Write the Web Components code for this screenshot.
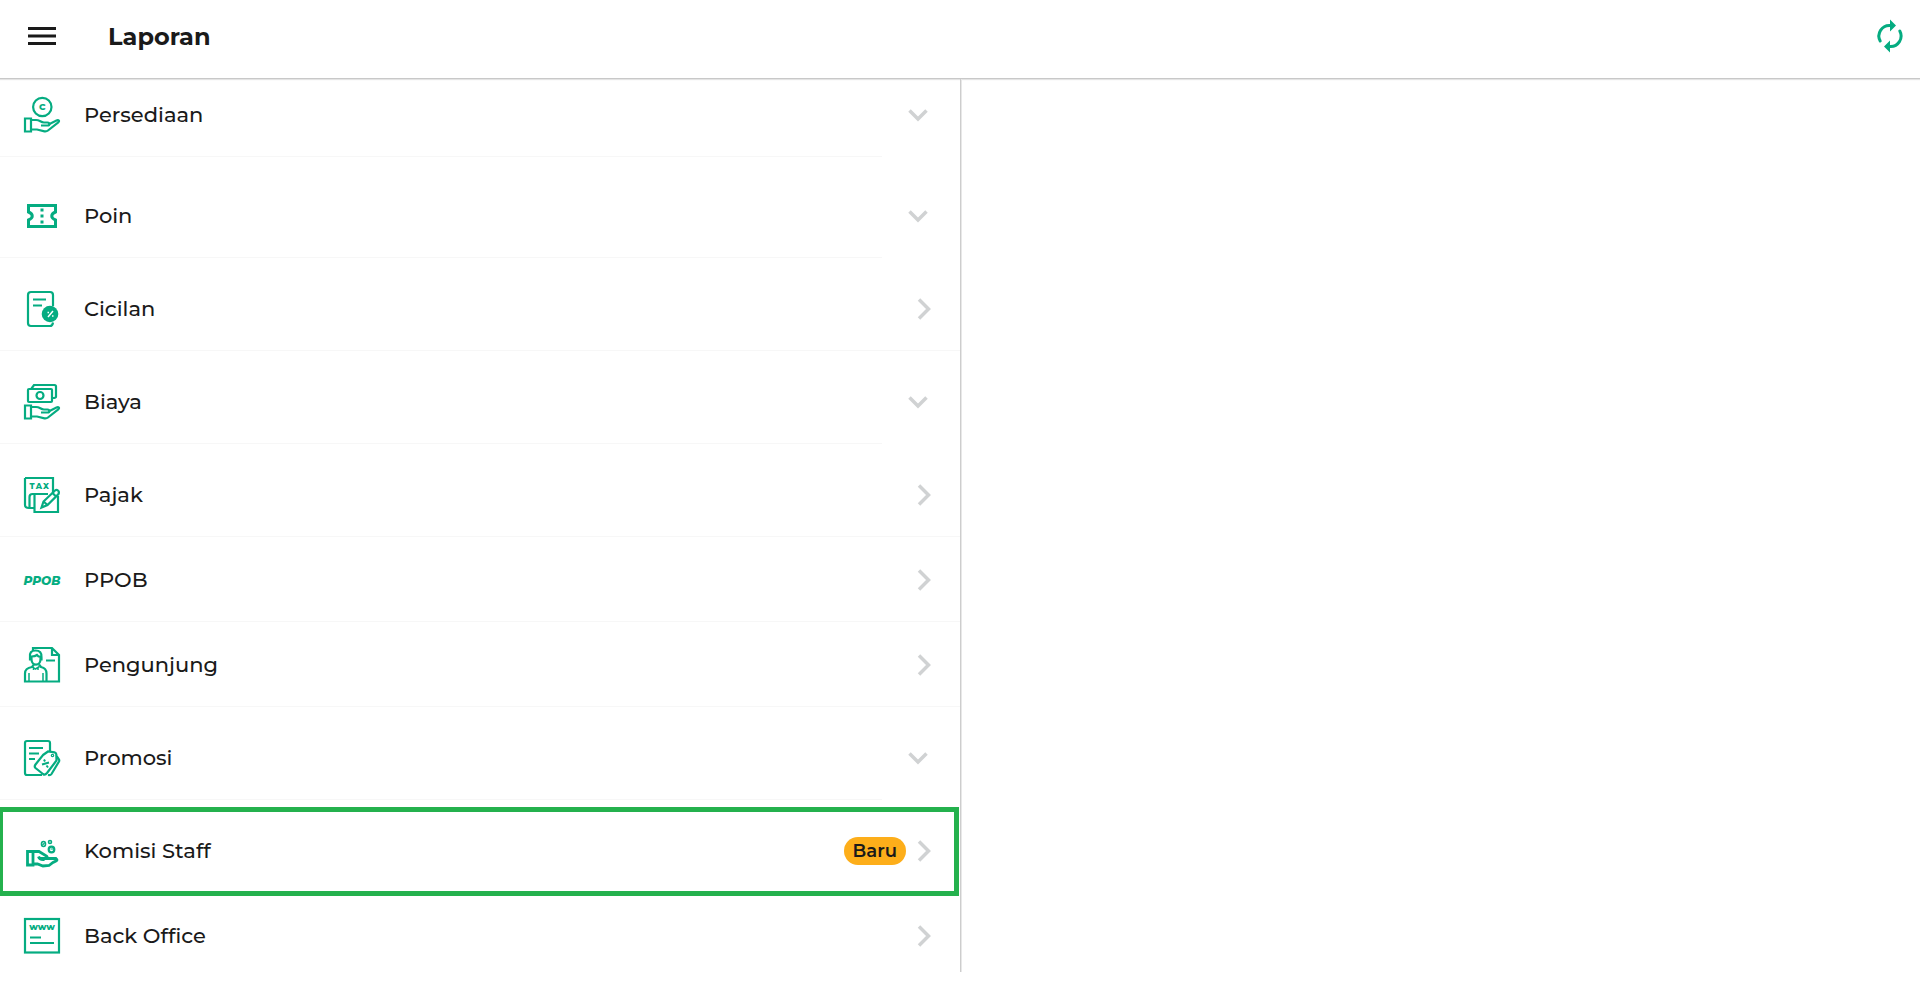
<!DOCTYPE html>
<html lang="id">
<head>
<meta charset="utf-8">
<title>Laporan</title>
<style>
    body {
        margin: 0;
        background: #fff;
        color: #1a1a1a;
        font-family: Montserrat, Inter, "Open Sans", sans-serif;
    }
</style>
</head>
<body>

<report-page>
    <report-header slot="header">Laporan</report-header>
    <report-list>
        <report-item icon="stock" expandable>Persediaan</report-item>
        <report-item icon="ticket" expandable spacing="wide">Poin</report-item>
        <report-item icon="installment" spacing="normal">Cicilan</report-item>
        <report-item icon="cost" expandable spacing="normal">Biaya</report-item>
        <report-item icon="tax" spacing="normal">Pajak</report-item>
        <report-item icon="ppob">PPOB</report-item>
        <report-item icon="visitor">Pengunjung</report-item>
        <report-item icon="promo" expandable spacing="normal">Promosi</report-item>
        <report-item icon="commission" spacing="normal" highlighted>
            Komisi Staff
            <report-badge slot="badge">Baru</report-badge>
        </report-item>
        <report-item icon="office">Back Office</report-item>
    </report-list>
</report-page>

<script>
const HAND = `
    <path d="M1 21.500h6v13H1z"/>
    <path d="M7 23h5c4 0 4.500 2.500 8 2.500h3.500c2.500 0 2.500 3 0 3H17"/>
    <path d="M25.500 27l7-3.500c2-1 3.500.5 1.800 1.800L24 33.500c-1 .8-2 1-3.500.8L13 32.500H7"/>`;

const ICONS = {
    menu: `<path d="M4 10.500h28M4 18h28M4 25.500h28" stroke-width="3"/>`,
    refresh: `
        <path d="M8.200 23A10.500 10.500 0 0 1 18 7.500M27.800 13A10.500 10.500 0 0 1 18 28.500" stroke-width="3" stroke-linecap="round"/>
        <path d="M18 1.500l6 6-6 6zM18 22.500l-6 6 6 6z" fill="currentColor" stroke="none"/>`,
    down: `<path d="M9.500 13.500l8.500 8.500 8.500-8.500" stroke-width="3.500"/>`,
    right: `<path d="M13 8.500l9.500 9.500-9.500 9.500" stroke-width="3.500"/>`,
    stock: `
        <circle cx="18.300" cy="10" r="9.200"/>
        <text x="18.300" y="13.200" font-size="9" font-weight="800" text-anchor="middle">C</text>
        ${HAND}`,
    ticket: `
        <path d="M4.500 7.500h27V14c-5 2-5 6 0 8v6.500h-27V22c5-2 5-6 0-8z" stroke-width="3"/>
        <path d="M18 10.500v3M18 16.500v3M18 22.500v3" stroke-width="3"/>`,
    installment: `
        <path d="M29 15V4q0-3-3-3H7Q4 1 4 4v28q0 3 3 3h19q2.500 0 3-3.500"/>
        <path d="M9 8.500h13M9 14.500h9"/>
        <circle cx="26" cy="23" r="8.300" fill="currentColor" stroke="none"/>
        <path d="M24 26l5-6M23.500 21.500H25M28 25h1.500" stroke="#fff" stroke-width="1.500"/>`,
    cost: `
        <rect x="4" y="5" width="24" height="13" rx="1"/>
        <path d="M7.500 4.500L10 1h20.500q1.500 0 1.500 1.500v10.200q0 1.300-3.500 1.300"/>
        <circle cx="16" cy="11.500" r="3.500"/>
        ${HAND}`,
    tax: `
        <path d="M1 1h28v15M1 1v27q0 3 4 3h5.500"/>
        <path d="M5.500 31V20q0-3 3-3H24M10.500 18v17H34V19"/>
        <g font-size="8" font-weight="800" text-anchor="middle">
            <text x="8" y="11.500">T</text>
            <text x="15" y="11.500">A</text>
            <text x="22" y="11.500">X</text>
        </g>
        <path d="M17.500 30.500l2-6L31 13.500q1.500-1.300 3 0t.5 3.500L23.500 28zM28.500 16l3.500 3.500M19.500 24.500l4 3.500"/>`,
    ppob: `<text x="18" y="22.500" font-size="12" font-weight="800" font-style="italic" text-anchor="middle">PPOB</text>`,
    visitor: `
        <path d="M9 3V1h19l7 7v26.500H1v-8q0-5.500 7-6.500l2-2.500M15 17.500l2 2.500q5.500 1 5.500 6.500v8M28 1v7h7M22 13.500h9"/>
        <path d="M6 10.500Q5 3.500 11.500 3.500T17.500 10.500v2h-1v-3h-2l-1.500-1.500Q11 9.500 7.500 9.500v3H6zM7.500 12c0 7.500 9 7.500 9 0"/>
        <path d="M8 19.500l3.500 2.500 4-2.500M9.500 21v2M14 21v2M5 26v8.500M19 26v8.500" stroke-width="1.500"/>`,
    promo: `
        <path d="M18 35H3q-2 0-2-2V3q0-2 2-2h21q2 0 2 2v8"/>
        <path d="M5 8h14M5 13.500h10M5 19h6"/>
        <path d="M19 15l5-3.500 6.500.8q1.500.3 1.800 2l.2 6.200-9.500 12.500q-2 2.500-4 1L11.500 28q-1.500-1.500 0-3.500zM32 15l3 4.500q.5 1 0 2L27.500 34q-1 1.500-3.500 1"/>
        <circle cx="28.500" cy="15.500" r="1.200" stroke-width="1.200"/>
        <path d="M18 24.500l7-2M20 19.500l1 2M22.500 25.500l1.500 2" stroke-width="2"/>`,
    commission: `
        <path d="M3.500 18.500H9V32H3.500zM9 18.500h6l7.500 4.500q1.500 1.500 0 2.500H16" stroke-width="2.800"/>
        <path d="M22 25.500h10q2 1.500 0 2.500l-3 1.500-4 3-6 .5-5.500-2H9M14.500 23.500q1 3.500 6 3" stroke-width="2.800"/>
        <ellipse cx="19.500" cy="11" rx="2" ry="2.500" stroke-width="1.600"/>
        <ellipse cx="26" cy="9" rx="1.500" ry="1.500" stroke-width="1.600"/>
        <circle cx="27.500" cy="16.500" r="2.800"/>
        <path d="M18.500 12l2-2M26.500 16h2.500" stroke-width="1.200"/>`,
    office: `
        <rect x="1" y="1" width="34" height="33.500"/>
        <text x="18" y="12" font-size="9" font-weight="800" text-anchor="middle">www</text>
        <path d="M6 19.500h11M6 25h24"/>`
};

class ReportIcon extends HTMLElement {

    static get styles() {
        return `
        <style>
            :host {
                display: block;
                flex: none;
                width: 36px;
                height: 36px;
            }

            svg {
                display: block;
                width: 100%;
                height: 100%;
                overflow: visible;
            }

            text {
                fill: currentColor;
                stroke: none;
            }
        </style>
        `;
    }

    constructor() {
        super();
        this.attachShadow({ mode: 'open' });
    }

    connectedCallback() {
        this.shadowRoot.innerHTML = this.constructor.styles + `
            <svg viewBox="0 0 36 36" fill="none" stroke="currentColor" stroke-width="2.200" aria-hidden="true">
                ${ICONS[this.getAttribute('name')] || ''}
            </svg>
        `;
    }
}

class ReportBadge extends HTMLElement {

    constructor() {
        super();
        this.attachShadow({ mode: 'open' });
        this.shadowRoot.innerHTML = `
        <style>
            :host {
                display: block;
                padding: 0 9px;
                border-radius: 14px;
                background: #fdae1a;
                font-size: 18px;
                line-height: 28px;
                font-weight: 600;
            }
        </style>
        <slot></slot>
        `;
    }
}

class ReportHeader extends HTMLElement {

    static get styles() {
        return `
        <style>
            :host {
                display: flex;
                align-items: center;
                box-sizing: border-box;
                height: 79px;
                padding: 0 12px 6px 24px;
                border-bottom: 1px solid #c8c8c8;
                box-shadow: 0 1px 1px #e4e4e4;
            }

            button {
                padding: 0;
                border: 0;
                background: none;
                color: inherit;
                cursor: pointer;
            }

            h1 {
                flex: 1;
                margin: 0;
                padding: 2px 0 0 48px;
                font-size: 24px;
                line-height: 32px;
                font-weight: 700;
            }

            .refresh {
                color: #05ac81;
            }
        </style>
        `;
    }

    static get markup() {
        return `
            <button aria-label="Menu"><report-icon name="menu"></report-icon></button>
            <h1><slot></slot></h1>
            <button class="refresh" aria-label="Muat ulang"><report-icon name="refresh"></report-icon></button>
        `;
    }

    constructor() {
        super();
        this.attachShadow({ mode: 'open' });
        this.shadowRoot.innerHTML = this.constructor.styles + this.constructor.markup;
    }
}

class ReportItem extends HTMLElement {

    static get styles() {
        return `
        <style>
            :host {
                display: block;
                position: relative;
            }

            :host([spacing="normal"]) {
                margin-top: 8px;
            }

            :host([spacing="wide"]) {
                margin-top: 16px;
            }

            button {
                display: flex;
                align-items: center;
                width: 100%;
                height: 85px;
                padding: 0 18px 0 24px;
                border: 0;
                background: linear-gradient(#f7f7f7, #f7f7f7) left bottom / 100% 1px no-repeat;
                color: inherit;
                font: inherit;
                font-size: 21px;
                line-height: 28px;
                font-weight: 500;
                text-align: left;
                cursor: pointer;
            }

            :host([expandable]) button {
                padding-right: 24px;
                background-size: calc(100% - 78px) 1px;
            }

            .icon {
                color: #05ac81;
            }

            .label {
                flex: 1;
                margin-left: 24px;
            }

            .arrow {
                color: #d0d2d3;
            }

            :host([highlighted]) button {
                background: none;
            }

            :host([highlighted])::after {
                content: "";
                position: absolute;
                inset: -1px 1px -3px -2px;
                border: 5px solid #24b14d;
                pointer-events: none;
            }
        </style>
        `;
    }

    constructor() {
        super();
        this.attachShadow({ mode: 'open' });
    }

    connectedCallback() {
        const arrow = this.hasAttribute('expandable') ? 'down' : 'right';
        this.shadowRoot.innerHTML = this.constructor.styles + `
            <button>
                <report-icon class="icon" name="${this.getAttribute('icon')}"></report-icon>
                <span class="label"><slot></slot></span>
                <slot name="badge"></slot>
                <report-icon class="arrow" name="${arrow}"></report-icon>
            </button>
        `;
        if (this.hasAttribute('expandable')) {
            this.shadowRoot.querySelector('button').setAttribute('aria-expanded', 'false');
        }
    }
}

class ReportList extends HTMLElement {

    constructor() {
        super();
        this.attachShadow({ mode: 'open' });
        this.shadowRoot.innerHTML = `
        <style>
            :host {
                display: block;
                margin-top: -7px;
            }
        </style>
        <slot></slot>
        `;
    }
}

class ReportPage extends HTMLElement {

    static get styles() {
        return `
        <style>
            :host {
                display: flex;
                flex-direction: column;
                box-sizing: border-box;
                height: 100vh;
                padding-bottom: 20px;
            }

            main {
                flex: 1;
                min-height: 0;
                display: grid;
                grid-template-columns: 1fr 1fr;
            }

            nav {
                min-height: 0;
                overflow: hidden;
            }

            section {
                border-left: 1px solid #cdcdcd;
                box-shadow: inset 1px 0 #e8e8e8;
            }
        </style>
        `;
    }

    static get markup() {
        return `
            <slot name="header"></slot>
            <main>
                <nav><slot></slot></nav>
                <section></section>
            </main>
        `;
    }

    constructor() {
        super();
        this.attachShadow({ mode: 'open' });
        this.shadowRoot.innerHTML = this.constructor.styles + this.constructor.markup;
    }
}

customElements.define('report-icon', ReportIcon);
customElements.define('report-badge', ReportBadge);
customElements.define('report-header', ReportHeader);
customElements.define('report-item', ReportItem);
customElements.define('report-list', ReportList);
customElements.define('report-page', ReportPage);
</script>
</body>
</html>
